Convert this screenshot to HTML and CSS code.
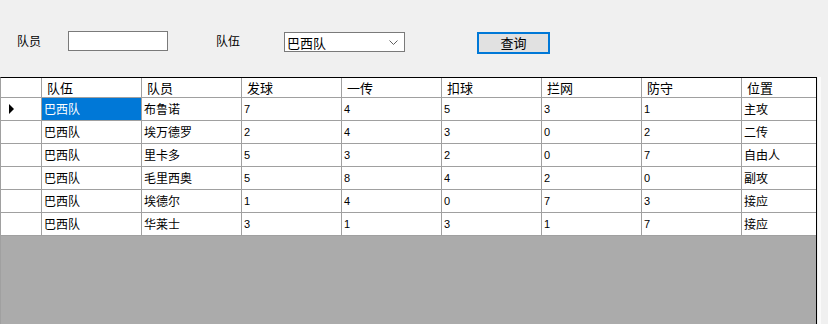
FILE: index.html
```html
<!DOCTYPE html>
<html lang="zh">
<head>
  <meta charset="UTF-8" />
  <title>队员查询</title>
  <link rel="stylesheet" href="styles.css">
</head>
<body>
  <div class="query-bar">
    <label class="lbl lbl-player">队员</label>
    <input type="text" class="txt-player" />
    <label class="lbl lbl-team">队伍</label>
    <div class="combo">
      <span>巴西队</span>
      <svg class="chevron" width="9" height="6" viewBox="0 0 9 6"><path d="M0.5 0.5 L4.5 4.5 L8.5 0.5" fill="none" stroke="#606060" stroke-width="1"/></svg>
    </div>
    <button type="button" class="btn-query">查询</button>
  </div>

  <div class="grid-wrap">
    <div class="grid-view">
      <table class="grid">
        <thead>
          <tr>
            <th class="row-head"></th>
            <th>队伍</th><th>队员</th><th>发球</th><th>一传</th><th>扣球</th><th>拦网</th><th>防守</th><th class="last">位置</th>
          </tr>
        </thead>
        <tbody id="rows"></tbody>
      </table>
    </div>
    <div class="edge"></div>
  </div>

  <script>
    const players = [
      ["巴西队", "布鲁诺", 7, 4, 5, 3, 1, "主攻"],
      ["巴西队", "埃万德罗", 2, 4, 3, 0, 2, "二传"],
      ["巴西队", "里卡多", 5, 3, 2, 0, 7, "自由人"],
      ["巴西队", "毛里西奥", 5, 8, 4, 2, 0, "副攻"],
      ["巴西队", "埃德尔", 1, 4, 0, 7, 3, "接应"],
      ["巴西队", "华莱士", 3, 1, 3, 1, 7, "接应"]
    ];
    const tbody = document.getElementById("rows");
    players.forEach(function (p, i) {
      const tr = document.createElement("tr");
      const head = document.createElement("td");
      head.className = "row-head";
      if (i === 0) head.innerHTML = '<span class="current"></span>';
      tr.appendChild(head);
      p.forEach(function (v, j) {
        const td = document.createElement("td");
        td.textContent = v;
        if (typeof v === "number") td.className = "num";
        if (i === 0 && j === 0) td.className = "selected";
        if (j === p.length - 1) td.classList.add("last");
        tr.appendChild(td);
      });
      tbody.appendChild(tr);
    });
  </script>
</body>
</html>
```
FILE: styles.css
```css
body {
  margin: 0;
  background: #f0f0f0;
  font-family: "Noto Sans CJK SC", "Liberation Sans", sans-serif;
  font-size: 12px;
  color: #000;
  width: 828px;
  height: 324px;
  overflow: hidden;
}

.query-bar {
  height: 77px;
  display: flex;
  align-items: flex-start;
  padding-top: 31px;
  box-sizing: border-box;
}

.lbl {
  line-height: 20px;
  width: 24px;
}

.lbl-player {
  margin-left: 17px;
}

.txt-player {
  margin: 0 0 0 27px;
  width: 100px;
  height: 20px;
  box-sizing: border-box;
  border: 1px solid #7a7a7a;
  background: #fff;
  padding: 0;
}

.lbl-team {
  margin-left: 48px;
}

.combo {
  margin-left: 44px;
  margin-top: 1px;
  width: 121px;
  height: 20px;
  box-sizing: border-box;
  border: 1px solid #7a7a7a;
  background: #fff;
  display: flex;
  align-items: center;
  justify-content: space-between;
  padding: 0 6px 0 2px;
  font-size: 13px;
}

.chevron {
  margin-top: 1px;
}

.btn-query {
  margin-left: 72px;
  margin-top: 1px;
  width: 73px;
  height: 22px;
  box-sizing: border-box;
  border: 2px solid #0078d7;
  background: #e1e1e1;
  font-family: "Noto Sans CJK SC", sans-serif;
  font-size: 13px;
  padding: 0;
  line-height: 16px;
}

.grid-wrap {
  display: flex;
}

.grid-view {
  width: 817px;
  height: 247px;
  box-sizing: border-box;
  background: #ababab;
  border-top: 1px solid #000;
  border-right: 1px solid #000;
  border-left: 1px solid #a0a0a0;
  overflow: hidden;
}

.edge {
  width: 3px;
  margin-left: 1px;
  background: #fafafa;
}

.grid {
  border-collapse: separate;
  border-spacing: 0;
  table-layout: fixed;
  width: 815px;
  background: #fff;
}

.grid th,
.grid td {
  box-sizing: border-box;
  width: 100px;
  border-right: 1px solid #a0a0a0;
  border-bottom: 1px solid #a0a0a0;
  padding: 0 0 0 2px;
  text-align: left;
  white-space: nowrap;
  overflow: hidden;
}

.grid th {
  height: 20px;
  font-weight: normal;
  font-size: 13px;
  padding-left: 5px;
  line-height: 19px;
}

.grid td {
  height: 23px;
  font-size: 12px;
  line-height: 22px;
}

.grid .row-head {
  width: 41px;
  position: relative;
}

.grid .last {
  width: 74px;
  border-right: none;
}

.grid td.num {
  font-family: "Liberation Sans", sans-serif;
  font-size: 11px;
}

.grid td.selected {
  background: #0078d7;
  color: #fff;
}

.current {
  position: absolute;
  left: 8px;
  top: 6px;
  width: 0;
  height: 0;
  border-top: 5px solid transparent;
  border-bottom: 5px solid transparent;
  border-left: 5px solid #000;
}
```
